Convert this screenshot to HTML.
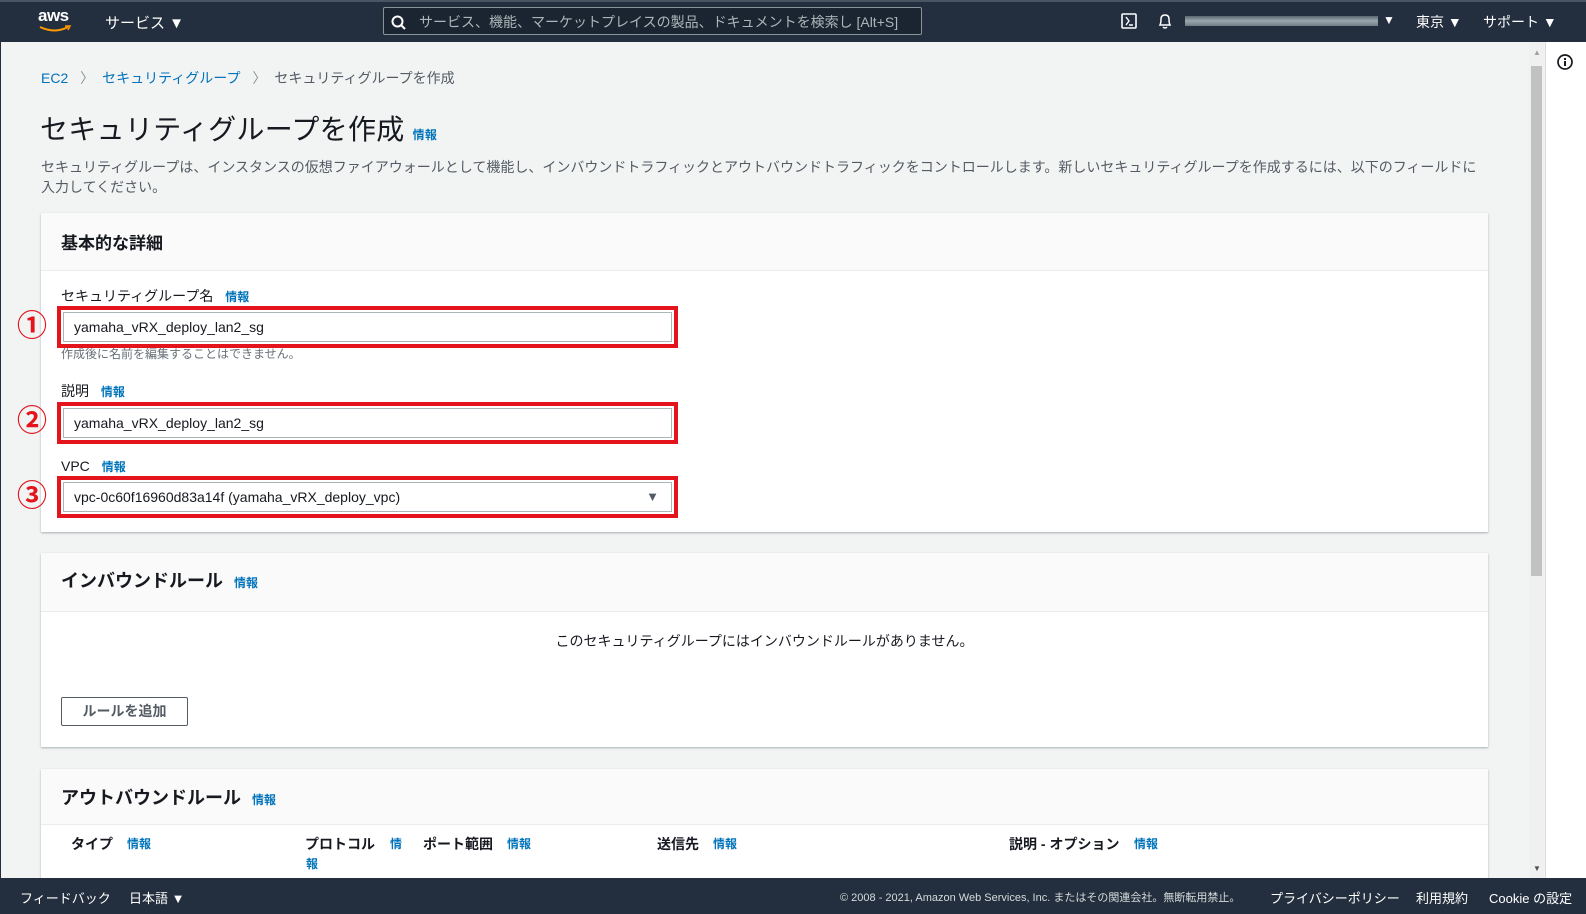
<!DOCTYPE html>
<html><head><meta charset="utf-8"><style>
*{box-sizing:border-box;margin:0;padding:0}
body{width:1586px;height:914px;overflow:hidden;background:#f2f3f3;font-family:"Liberation Sans","Noto Sans CJK JP",sans-serif;color:#16191f;position:relative}
.a{position:absolute;white-space:nowrap}
.hdr{position:absolute;left:0;top:0;width:1586px;height:42px;background:#232f3e;border-top:2px solid #4a5563}
.ftr{position:absolute;left:0;top:878px;width:1586px;height:36px;background:#232f3e;color:#fff;font-size:13px}
.lnk{color:#0073bb}
.info{color:#0073bb;font-size:12px;font-weight:bold}
.card{position:absolute;left:41px;width:1447px;background:#fff;box-shadow:0 1px 2px rgba(0,28,36,.3);}
.ch{background:#fafafa;border-bottom:1px solid #eaeded}
.red{position:absolute;left:57px;width:621px;height:42px;border:4px solid #e3141c}
.inp{position:absolute;left:2px;top:2px;right:2px;bottom:2px;border:1px solid #aab7b8;background:#fff;font-size:14px;padding:6px 10px}
.num{position:absolute;left:17px;color:#e3141c;font-size:30px;line-height:30px;font-weight:bold}
.lbl{font-size:14px}
.col{font-size:14px;font-weight:bold}
</style></head><body>
<div style="position:absolute;left:0;top:42px;width:1px;height:836px;background:#232f3e"></div>
<div class="hdr">
 <div class="a" style="left:38px;top:4px;color:#fff;font-size:17px;font-weight:bold;letter-spacing:-0.5px">aws</div>
 <svg class="a" style="left:38px;top:23px" width="34" height="9"><path d="M2 2 Q17 9 30 2" stroke="#f90" stroke-width="2" fill="none"/><path d="M27 1 L32 1 L30 5" stroke="#f90" stroke-width="1.5" fill="none"/></svg>
 <div class="a" style="left:105px;top:10px;color:#fff;font-size:15px">サービス ▼</div>
 <div class="a" style="left:383px;top:5px;width:539px;height:28px;border:1px solid #879596;border-radius:2px;background:#1b2532"></div>
 <svg class="a" style="left:391px;top:13px" width="16" height="16"><circle cx="6.5" cy="6.5" r="5" stroke="#fff" stroke-width="2" fill="none"/><path d="M10 10 L14 14" stroke="#fff" stroke-width="2"/></svg>
 <div class="a" style="left:419px;top:10px;color:#aab7b8;font-size:14px">サービス、機能、マーケットプレイスの製品、ドキュメントを検索し  [Alt+S]</div>
 <svg class="a" style="left:1121px;top:11px" width="16" height="16"><rect x="1" y="1" width="14" height="14" rx="1" stroke="#fff" stroke-width="1.6" fill="none"/><path d="M5 4 L8 8 L5 12 M8 12 H12" stroke="#fff" stroke-width="1.4" fill="none"/></svg>
 <svg class="a" style="left:1157px;top:10px" width="16" height="18"><path d="M3 13 Q4 11 4 7 Q4 3 8 3 Q12 3 12 7 Q12 11 13 13 Z M6 15 Q8 17 10 15" stroke="#fff" stroke-width="1.5" fill="none"/></svg>
 <div class="a" style="left:1185px;top:14px;width:193px;height:10px;background:linear-gradient(#5b6872,#9aa7ad,#6f7c85)"></div>
 <div class="a" style="left:1383px;top:11px;color:#fff;font-size:12px">▼</div>
 <div class="a" style="left:1416px;top:10px;color:#fff;font-size:14px">東京 ▼</div>
 <div class="a" style="left:1483px;top:10px;color:#fff;font-size:14px">サポート ▼</div>
</div>
<div class="a" style="left:1545px;top:42px;width:41px;height:836px;background:#fff;border-left:1px solid #d5dbdb"></div>
<svg class="a" style="left:1556px;top:53px" width="18" height="18"><circle cx="9" cy="9" r="7" stroke="#16191f" stroke-width="1.7" fill="none"/><rect x="8" y="8" width="2" height="5" fill="#16191f"/><rect x="8" y="5" width="2" height="2" fill="#16191f"/></svg>
<div class="a" style="left:1529px;top:42px;width:15px;height:836px;background:#f0f0f0"></div>
<div class="a" style="left:1531px;top:66px;width:11px;height:510px;background:#c1c1c1"></div>
<div class="a" style="left:1533px;top:48px;color:#a0a0a0;font-size:8px">▲</div>
<div class="a" style="left:1533px;top:864px;color:#505050;font-size:8px">▼</div>

<div class="a" style="left:41px;top:68px;font-size:14px"><span class="lnk">EC2</span> <span style="color:#879596;margin:0 8px">〉</span><span class="lnk">セキュリティグループ</span> <span style="color:#879596;margin:0 8px">〉</span><span style="color:#545b64">セキュリティグループを作成</span></div>
<div class="a" style="left:40px;top:108px;font-size:28px;letter-spacing:0.3px">セキュリティグループを作成 <span class="info">情報</span></div>
<div class="a" style="left:41px;top:157px;font-size:14px;color:#545b64;line-height:20px;white-space:normal;width:1440px">セキュリティグループは、インスタンスの仮想ファイアウォールとして機能し、インバウンドトラフィックとアウトバウンドトラフィックをコントロールします。新しいセキュリティグループを作成するには、以下のフィールドに入力してください。</div>

<div class="card" style="top:213px;height:319px">
 <div class="ch" style="height:58px"><div class="a" style="left:20px;top:16px;font-size:17px;font-weight:bold">基本的な詳細</div></div>
</div>
<div class="a lbl" style="left:61px;top:286px">セキュリティグループ名 <span class="info" style="margin-left:8px">情報</span></div>
<div class="red" style="top:306px"><div class="inp">yamaha_vRX_deploy_lan2_sg</div></div>
<div class="a" style="left:61px;top:345px;font-size:12px;color:#687078">作成後に名前を編集することはできません。</div>
<div class="a lbl" style="left:61px;top:381px">説明 <span class="info" style="margin-left:8px">情報</span></div>
<div class="red" style="top:402px"><div class="inp">yamaha_vRX_deploy_lan2_sg</div></div>
<div class="a lbl" style="left:61px;top:458px">VPC <span class="info" style="margin-left:8px">情報</span></div>
<div class="red" style="top:476px"><div class="inp">vpc-0c60f16960d83a14f (yamaha_vRX_deploy_vpc)<span style="position:absolute;right:12px;top:6px;color:#545b64;font-size:13px">▼</span></div></div>
<div class="num" style="top:312px">①</div>
<div class="num" style="top:407px">②</div>
<div class="num" style="top:482px">③</div>

<div class="card" style="top:553px;height:194px">
 <div class="ch" style="height:59px"><div class="a" style="left:20px;top:14px;font-size:18px;font-weight:bold">インバウンドルール <span class="info" style="font-size:12px;margin-left:6px">情報</span></div></div>
 <div class="a" style="left:0;width:1447px;top:78px;text-align:center;font-size:14px">このセキュリティグループにはインバウンドルールがありません。</div>
 <div class="a" style="left:20px;top:144px;width:127px;height:29px;border:1px solid #545b64;border-radius:2px;font-size:14px;font-weight:bold;color:#545b64;text-align:center;line-height:27px">ルールを追加</div>
</div>

<div class="card" style="top:769px;height:120px">
 <div class="ch" style="height:56px"><div class="a" style="left:20px;top:15px;font-size:18px;font-weight:bold">アウトバウンドルール <span class="info" style="font-size:12px;margin-left:6px">情報</span></div></div>
</div>
<div class="a col" style="left:71px;top:834px">タイプ</div><div class="a info" style="left:127px;top:835px">情報</div>
<div class="a col" style="left:305px;top:834px">プロトコル</div><div class="a info" style="left:390px;top:835px">情</div><div class="a info" style="left:306px;top:855px">報</div>
<div class="a col" style="left:423px;top:834px">ポート範囲</div><div class="a info" style="left:507px;top:835px">情報</div>
<div class="a col" style="left:657px;top:834px">送信先</div><div class="a info" style="left:713px;top:835px">情報</div>
<div class="a col" style="left:1009px;top:834px">説明 - オプション</div><div class="a info" style="left:1134px;top:835px">情報</div>

<div class="ftr">
 <div class="a" style="left:20px;top:10px">フィードバック</div>
 <div class="a" style="left:129px;top:10px">日本語 ▼</div>
 <div class="a" style="left:840px;top:11px;font-size:11px;color:#d5dbdb">© 2008 - 2021, Amazon Web Services, Inc. またはその関連会社。無断転用禁止。</div>
 <div class="a" style="left:1270px;top:10px">プライバシーポリシー</div>
 <div class="a" style="left:1416px;top:10px">利用規約</div>
 <div class="a" style="left:1489px;top:10px">Cookie の設定</div>
</div>
</body></html>
